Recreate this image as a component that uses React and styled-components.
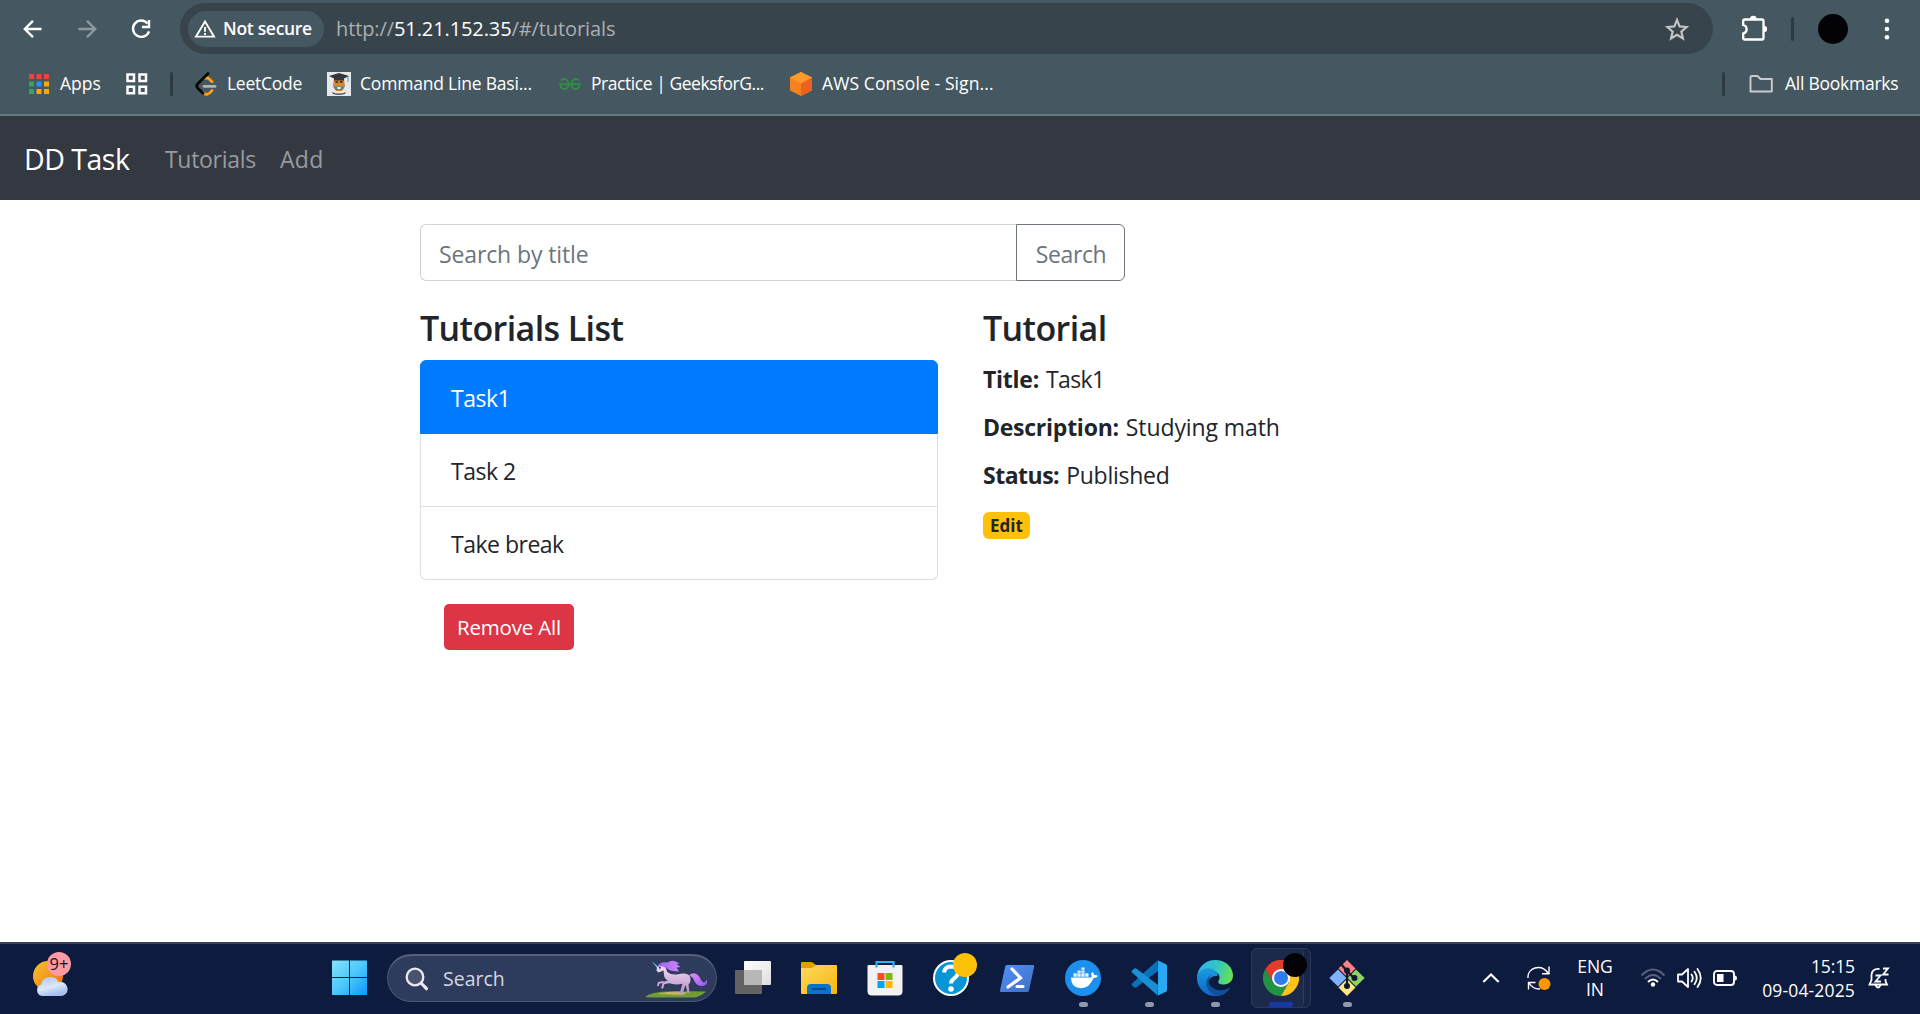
import React from "react";
import styled, { createGlobalStyle } from "styled-components";

const Global = createGlobalStyle`
  *, *::before, *::after { box-sizing: border-box; }
  html, body { margin: 0; padding: 0; }
  body {
    font-family: "Open Sans", "Noto Sans", sans-serif;
    color: #212529;
    background: #fff;
    overflow: hidden;
  }
  button, input { font: inherit; margin: 0; }
  svg { display: block; flex: none; }
`;

const Screen = styled.div`
  width: 1920px;
  height: 1014px;
  display: flex;
  flex-direction: column;
`;

/* ---------- browser chrome ---------- */
const Chrome = styled.header`
  height: 116px;
  background: #455760;
  border-bottom: 2px solid #66777e;
  color: #fff;
`;
const AddressRow = styled.div`
  height: 57px;
  padding: 3px 30px 3px 21px;
  display: flex;
  align-items: center;
`;
const NavButtons = styled.div`
  width: 159px;
  display: flex;
  gap: 30px;
`;
const Omnibox = styled.div`
  width: 1533px;
  height: 51px;
  padding: 0 23px 0 8px;
  border-radius: 26px;
  background: #38444b;
  display: flex;
  align-items: center;
`;
const SecurityChip = styled.div`
  width: 136px;
  height: 36px;
  padding-left: 6px;
  border-radius: 18px;
  background: #455760;
  display: flex;
  align-items: center;
  gap: 7px;
  font-size: 17.5px;
  font-weight: 600;
  line-height: 34px;
  letter-spacing: -0.3px;
  white-space: nowrap;
  span { padding-bottom: 1px; }
`;
const Url = styled.div`
  flex: 1;
  padding: 0 0 1px 12px;
  font-size: 20px;
  letter-spacing: -0.1px;
  color: #a9b0b3;
  b { font-weight: 400; color: #fff; }
`;
const ToolbarRight = styled.div`
  flex: 1;
  padding-left: 28px;
  display: flex;
  align-items: center;
`;
const Separator = styled.i`
  width: 3px;
  height: 24px;
  border-radius: 2px;
  background: #2e3a41;
  margin: ${(p) => p.$margin || 0};
`;
const Avatar = styled.div`
  width: 30px;
  height: 30px;
  border-radius: 50%;
  background: #030207;
`;
const BookmarkRow = styled.div`
  height: 54px;
  padding: 0 22px 0 27px;
  display: flex;
  align-items: center;
`;
const Bookmark = styled.div`
  width: ${(p) => p.$width}px;
  display: flex;
  align-items: center;
  gap: ${(p) => p.$gap || 9}px;
  font-size: 17.5px;
  letter-spacing: ${(p) => p.$track || 0}px;
  white-space: nowrap;
  span { padding-bottom: 2px; }
`;
const Spacer = styled.div` flex: 1; `;

/* ---------- web page ---------- */
const Navbar = styled.nav`
  height: 84px;
  padding: 1px 24px 0;
  background: #343841;
  display: flex;
  align-items: center;
`;
const Brand = styled.a`
  width: 141px;
  color: #fff;
  font-size: 28.5px;
  letter-spacing: -0.5px;
`;
const NavLink = styled.a`
  width: ${(p) => p.$width}px;
  padding-top: 1px;
  color: #999b9f;
  font-size: 23px;
  letter-spacing: ${(p) => p.$track || 0}px;
`;
const Page = styled.main`
  flex: 1;
  padding-top: 24px;
`;
const Content = styled.div`
  width: 1080px;
  margin: 0 auto;
`;
const SearchGroup = styled.form`
  width: 705px;
  height: 57px;
  display: flex;
  margin-bottom: 24px;
`;
const SearchInput = styled.input`
  flex: 1;
  min-width: 0;
  padding: 3px 18px 0;
  border: 1px solid #ced4da;
  border-right: 0;
  border-radius: 6px 0 0 6px;
  outline: 0;
  font-size: 23px;
  letter-spacing: -0.12px;
  &::placeholder { color: #6c757d; opacity: 1; }
`;
const SearchButton = styled.button`
  width: 109px;
  padding: 3px 0 0 1px;
  border: 1px solid #6c757d;
  border-radius: 0 6px 6px 0;
  background: #fff;
  color: #6c757d;
  font-size: 23px;
  letter-spacing: -0.4px;
`;
const Columns = styled.div`
  display: grid;
  grid-template-columns: 518px 1fr;
  column-gap: 45px;
`;
const Column = styled.section``;
const Heading = styled.h4`
  margin: 0 0 8px;
  font-size: 34px;
  font-weight: 600;
  line-height: 47px;
  letter-spacing: -0.6px;
`;
const List = styled.ul`
  list-style: none;
  margin: 0 0 24px;
  padding: 0;
`;
const ListItem = styled.li`
  height: ${(p) => (p.$active ? 74 : 73)}px;
  padding: 19px 30px 0;
  border: solid ${(p) => (p.$active ? "#007bff" : "#dfdfdf")};
  border-width: ${(p) => (p.$active ? "1px" : "0 1px 1px")};
  background: ${(p) => (p.$active ? "#007bff" : "#fff")};
  color: ${(p) => (p.$active ? "#fff" : "#212529")};
  font-size: 23px;
  line-height: 36px;
  letter-spacing: -0.5px;
  &:first-child { border-radius: 6px 6px 0 0; }
  &:last-child { border-radius: 0 0 6px 6px; }
`;
const RemoveButton = styled.button`
  width: 130px;
  height: 46px;
  margin-left: 24px;
  padding: 0;
  border: 0;
  border-radius: 5px;
  background: #dc3545;
  color: #fff;
  font-size: 20.5px;
  letter-spacing: -0.2px;
`;
const Field = styled.p`
  margin: 0 0 12px;
  padding-top: 1px;
  height: 36px;
  display: flex;
  gap: 7px;
  font-size: 23px;
  line-height: 36px;
  letter-spacing: ${(p) => p.$track}px;
  strong { font-weight: 700; letter-spacing: ${(p) => p.$labelTrack}px; }
`;
const EditBadge = styled.a`
  display: inline-block;
  margin-top: 8px;
  width: 47px;
  height: 27px;
  border-radius: 6px;
  background: #ffc107;
  font-size: 17px;
  font-weight: 700;
  line-height: 27px;
  text-align: center;
`;

/* ---------- taskbar ---------- */
const Taskbar = styled.footer`
  height: 72px;
  padding-bottom: 2px;
  background: #0d1b3e;
  border-top: 2px solid #3b4258;
  display: flex;
  align-items: center;
  color: #fff;
`;
const Weather = styled.div`
  width: 316px;
  padding-left: 30px;
  position: relative;
`;
const CountBadge = styled.span`
  position: absolute;
  left: 47px;
  top: -6px;
  width: 24px;
  height: 24px;
  border-radius: 50%;
  background: #ff99a4;
  color: #111;
  font-size: 16.5px;
  line-height: 23px;
  text-align: center;
`;
const StartCell = styled.div`
  width: 71px;
  padding-left: 16px;
`;
const TaskSearch = styled.div`
  width: 330px;
  height: 48px;
  margin-right: 3px;
  padding: 0 8px 0 17px;
  border: 1px solid #4b5674;
  border-top: 2px solid #56607c;
  border-radius: 24px;
  background: #2f3b5c;
  display: flex;
  align-items: center;
  gap: 14px;
  color: #d3d7e0;
  font-size: 19.5px;
  span { flex: 1; }
`;
const AppCell = styled.div`
  width: 66px;
  height: 60px;
  display: flex;
  align-items: center;
  justify-content: center;
  position: relative;
`;
const ActiveTile = styled.div`
  width: 60px;
  height: 60px;
  border-radius: 6px;
  border: 1px solid #2c3857;
  background: #1c294b;
  display: flex;
  align-items: center;
  justify-content: center;
  box-shadow: inset -6px 0 0 #18254a, inset -7px 0 0 #303c5a;
`;
const Running = styled.i`
  position: absolute;
  bottom: 1px;
  left: 50%;
  width: ${(p) => (p.$active ? 24 : 9)}px;
  height: 5px;
  margin-left: ${(p) => (p.$active ? -12 : -4.5)}px;
  border-radius: 3px;
  background: ${(p) => (p.$active ? "#1739a4" : "#9098ab")};
`;
const Dot = styled.i`
  position: absolute;
  left: 35px;
  top: 5px;
  width: 24px;
  height: 24px;
  border-radius: 50%;
  background: ${(p) => p.$color};
`;
const Tray = styled.div`
  flex: 1;
  padding-left: 102px;
  display: flex;
  align-items: center;
`;
const TrayItem = styled.div`
  width: ${(p) => p.$width}px;
`;
const TrayText = styled.div`
  width: ${(p) => p.$width}px;
  margin-right: ${(p) => p.$gap}px;
  text-align: ${(p) => p.$align || "center"};
  font-size: 17.5px;
  line-height: ${(p) => p.$line}px;
  letter-spacing: ${(p) => p.$track || 0}px;
  white-space: nowrap;
`;
const DateLine = styled.div`
  letter-spacing: 0.15px;
`;

/* ---------- icons ---------- */
const Arrow = ({ color, flip }) => (
  <svg width="24" height="24" viewBox="0 0 24 24" fill="none" stroke={color} strokeWidth="2.4">
    <g transform={flip ? "translate(24 0) scale(-1 1)" : undefined}>
      <path d="M20.500 12H4M12 3.800 3.800 12l8.200 8.200" />
    </g>
  </svg>
);
const Reload = () => (
  <svg width="24" height="24" viewBox="0 0 24 24" fill="none" stroke="#fff" strokeWidth="2.4">
    <path d="M18.600 6.500A8.200 8.200 0 1 0 20 14.300" />
    <path d="M20 3v7h-7" />
  </svg>
);
const Warning = () => (
  <svg width="22" height="20" viewBox="0 0 22 20" fill="none" stroke="#fff" strokeWidth="1.900">
    <path d="M11 2.600 20 17.600H2Z" />
    <path d="M11 8v4.800M11 14.100v2" />
  </svg>
);
const Star = () => (
  <svg width="26" height="26" viewBox="0 0 26 26" fill="none" stroke="#c3c5c6" strokeWidth="2.100">
    <path d="m13 3.900 2.600 6.500 7 .6-5.300 4.600 1.700 6.900-6-3.700-6 3.700 1.700-6.900-5.300-4.600 7-.6Z" />
  </svg>
);
const Puzzle = () => (
  <svg width="26" height="30" viewBox="0 0 26 30">
    <path d="M3.500 5.500H21a1.500 1.500 0 0 1 1.500 1.500V24a1.500 1.500 0 0 1-1.500 1.500H3.500A1.300 1.300 0 0 1 2.200 24.200V19.500C6.800 18.500 6.800 12 2.200 11V6.800A1.300 1.300 0 0 1 3.500 5.500Z" fill="none" stroke="#fff" strokeWidth="2.300" />
    <path d="M9 5a3.300 3.300 0 0 1 6.600 0ZM23 11.800a3.200 3.200 0 0 1 0 6.400Z" fill="#fff" />
  </svg>
);
const Kebab = () => (
  <svg width="6" height="22" viewBox="0 0 6 22" fill="#fff">
    <circle cx="3" cy="2.700" r="2.300" /><circle cx="3" cy="11" r="2.300" /><circle cx="3" cy="19.300" r="2.300" />
  </svg>
);
const AppsIcon = () => {
  const colors = ["#f44336", "#f44336", "#f44336", "#34a853", "#2196f3", "#fbab00", "#34a853", "#fbab00", "#fbab00"];
  return (
    <svg width="24" height="24" viewBox="0 0 24 24">
      {colors.map((c, i) => (
        <rect key={i} x={2 + (i % 3) * 7.5} y={2 + Math.floor(i / 3) * 7.5} width="5" height="5" fill={c} />
      ))}
    </svg>
  );
};
const GridIcon = () => (
  <svg width="24" height="24" viewBox="0 0 24 24" fill="none" stroke="#fff" strokeWidth="2.500">
    <path d="M2.500 2.500H9V9H2.500ZM14.500 2.500H21V9h-6.500ZM2.500 14.800H9v6.500H2.500ZM14.500 14.800H21v6.500h-6.500Z" />
  </svg>
);
const LeetIcon = () => (
  <svg width="22" height="24" viewBox="0 0 22 24" fill="none" strokeLinecap="round" strokeWidth="2.800">
    <path d="m9.500 6.200 3.500-.2 4 3.700M8 20.800c3 2.700 6 1.800 9-2.300" stroke="#ffa116" />
    <path d="M9 14.300h11" stroke="#b3b3b3" />
    <path d="M13 1.600 2.800 11.800q-2 2.200 0 4.400L8 21.200" stroke="#070706" />
  </svg>
);
const BootcampIcon = () => (
  <svg width="24" height="24" viewBox="0 0 24 24">
    <rect width="24" height="24" fill="#e8e8ea" />
    <path d="M7 7h10l1 7-3 5H9l-3-5Z" fill="#d9822f" />
    <path d="m2 4 10-3 10 3-5 2.500v2H7v-2Z" fill="#33363b" />
    <path d="M21 4v6" stroke="#2fa0bd" strokeWidth="1" />
    <path d="M8.500 10h2.600M13 10h2.600" stroke="#2d2722" strokeWidth="1.500" />
    <path d="m6 14 3 1 3-1 3 1 3-1-2.500 4h-7Z" fill="#2d8fa9" />
    <path d="M10.500 15h3v2h-3Z" fill="#fff" />
    <path d="M5 20q7 3 14 0l-1 2q-6 2-12 0Z" fill="#55585e" />
  </svg>
);
const GeeksIcon = () => (
  <svg width="24" height="16" viewBox="0 0 24 16" fill="none" stroke="#2f8d46" strokeWidth="1.900">
    <path d="M3 4.600C4.500 2.400 10 1.800 10.500 8 10.500 14.500 2.800 14.500 2.200 8.300H21.800C21.200 14.500 13.500 14.500 13.500 8 14 1.800 19.500 2.400 21 4.600" />
  </svg>
);
const AwsIcon = () => (
  <svg width="24" height="24" viewBox="0 0 24 24">
    <path d="m12 0 11 5.500v13L12 24 1 18.500v-13Z" fill="#f58220" />
    <path d="m12 0 11 5.500L12 11.500 1 5.500Z" fill="#fe9a2a" />
    <path d="M12 11.500 23 5.500v13L12 24Z" fill="#ed6120" />
  </svg>
);
const FolderOutline = () => (
  <svg width="25" height="20" viewBox="0 0 25 20" fill="none" stroke="#c9cbcc" strokeWidth="1.900" strokeLinejoin="round">
    <path d="M2.500 2h6l3 3h11.300v12.500H1.500V3Z" />
  </svg>
);
const WeatherIcon = () => (
  <svg width="40" height="40" viewBox="0 0 40 40">
    <defs>
      <linearGradient id="sun" x1="0" y1="0" x2="1" y2="1"><stop offset="0" stopColor="#f7c62f" /><stop offset="1" stopColor="#f06a14" /></linearGradient>
      <linearGradient id="cloud" x1="0" y1="0" x2=".4" y2="1"><stop offset="0" stopColor="#a9c2ee" /><stop offset=".6" stopColor="#dce8fb" /><stop offset="1" stopColor="#a5bfee" /></linearGradient>
    </defs>
    <circle cx="18" cy="18" r="15" fill="url(#sun)" />
    <path d="M12 38a6 6 0 0 1-1-11.500 9.500 9.500 0 0 1 17.800-2.200A7 7 0 1 1 30 38Z" fill="url(#cloud)" />
  </svg>
);
const WindowsIcon = () => (
  <svg width="36" height="36" viewBox="0 0 36 36">
    <defs><linearGradient id="win" x1="0" y1="0" x2="36" y2="36" gradientUnits="userSpaceOnUse"><stop offset="0" stopColor="#86e3fc" /><stop offset=".5" stopColor="#4cc7fb" /><stop offset="1" stopColor="#0a93ff" /></linearGradient></defs>
    <path d="M.5.500H17V17H0V1ZM18 .5H34.500L35 1v16H18ZM0 18h17v17H.5L0 34.500ZM18 18h17v16.500l-.5.500H18Z" fill="url(#win)" />
  </svg>
);
const Magnifier = () => (
  <svg width="24" height="24" viewBox="0 0 24 24" fill="none" stroke="#e8eaf0" strokeLinecap="round">
    <circle cx="10" cy="10" r="8.300" strokeWidth="2.300" fill="#48536f" />
    <path d="m16.500 16.500 5 5.200" strokeWidth="3.200" />
  </svg>
);
const Unicorn = () => (
  <svg width="63" height="40" viewBox="0 0 63 40">
    <defs>
      <linearGradient id="mane" x1="0" y1="0" x2="1" y2="0"><stop offset="0" stopColor="#a45be8" /><stop offset="1" stopColor="#c88bff" /></linearGradient>
      <linearGradient id="body" x1="0" y1="0" x2="0" y2="1"><stop offset="0" stopColor="#f3dcf4" /><stop offset="1" stopColor="#b58fc9" /></linearGradient>
      <linearGradient id="tail" x1="0" y1="0" x2="1" y2="1"><stop offset="0" stopColor="#f08be8" /><stop offset="1" stopColor="#8a5cff" /></linearGradient>
    </defs>
    <path d="M0 38q7-6 27-5.500 17-.5 34 0-4 4-11 6H3Z" fill="#6f9c33" />
    <path d="M12 35q17-4 30-1.500L38 36Z" fill="#c1b565" />
    <path d="m6.500 2 5.500 7 1.300-1.200Z" fill="#6dc2e2" />
    <path d="M44 16q8-5 12 5 3 5 6-.5 1 7-6 6.500-6-1-8-8Z" fill="url(#tail)" />
    <path d="m12 8 5-1.500q4 1 5 6 3 3.500 10 3 10-3 13 2 1.500 5-1.500 8l1 8.500-2-.2-2-8-3 9h-3l3-10q-8 1.500-13-.5l-5 .8-1.500 5-2-1 2-6 5-1.500q-4-2-4-6l-.5-4-5 2-2-1.800Z" fill="url(#body)" />
    <path d="m18 22-5 1-1 4 1.800.3.700-2.800 5.500-.5Z" fill="#c9a9da" />
    <path d="M12.500 7q3-5 10-3.500 4-3 8-1l4 2-3 .5 4 3-4 .5 2.500 4q-9 0-12-3-3-3-9.500-2.500Z" fill="url(#mane)" />
    <path d="M14 8.700h1.800" stroke="#2c1c44" strokeWidth="1.500" />
  </svg>
);
const TaskViewIcon = () => (
  <svg width="36" height="36" viewBox="0 0 36 36">
    <defs><linearGradient id="tv" x1="0" y1="0" x2="1" y2="1"><stop offset="0" stopColor="#fff" /><stop offset="1" stopColor="#dedede" /></linearGradient></defs>
    <rect y="10" width="27" height="24" rx="1" fill="#626262" />
    <rect x="9" y="1" width="27" height="24" rx="1" fill="url(#tv)" />
    <path d="M9 10h18v15H9Z" fill="#b7b7b7" />
  </svg>
);
const ExplorerIcon = () => (
  <svg width="36" height="36" viewBox="0 0 36 36">
    <defs><linearGradient id="fold" x1="0" y1="0" x2="1" y2="1"><stop offset="0" stopColor="#ffda62" /><stop offset="1" stopColor="#f7b50c" /></linearGradient></defs>
    <path d="M0 3q0-1 1-1h9q2 0 3 1.500L15 5v8H0Z" fill="#df9e05" />
    <path d="M0 8h10.500L15.500 5H35q1 0 1 1v27q0 1-1 1H1q-1 0-1-1Z" fill="url(#fold)" />
    <path d="M6 34V28q0-4 4-4h16q4 0 4 4v6Z" fill="#0b72c9" />
    <path d="M11 29h14" stroke="#064a8c" strokeWidth="2" />
  </svg>
);
const StoreIcon = () => (
  <svg width="36" height="36" viewBox="0 0 36 36">
    <path d="M2 5H34q1.500 0 1.500 1v25q0 4.500-4.500 4.500H5Q.5 35.500.5 31V6q0-1 1.500-1Z" fill="#f2f2f2" />
    <path d="M9.500 7.500V2h17v5.500" fill="none" stroke="#2cb3f0" strokeWidth="2.200" />
    <path d="M10.500 13h7v7h-7Z" fill="#f25022" /><path d="M18.500 13h7v7h-7Z" fill="#7fba00" />
    <path d="M10.500 21h7v7h-7Z" fill="#00a4ef" /><path d="M18.500 21h7v7h-7Z" fill="#ffb900" />
  </svg>
);
const HelpIcon = () => (
  <svg width="36" height="36" viewBox="0 0 36 36">
    <circle cx="18" cy="18" r="17" fill="#0795d8" stroke="#fff" strokeWidth="2" />
    <path d="M11 12.500Q12 6.500 18 6.500q7 .3 7 6 0 3-4 6-3 2.200-3 5" fill="none" stroke="#fff" strokeWidth="4" />
    <circle cx="18" cy="29" r="2.800" fill="#fff" />
  </svg>
);
const PowerShellIcon = () => (
  <svg width="36" height="36" viewBox="0 0 36 36">
    <defs><linearGradient id="ps" x1="0" y1="0" x2="1" y2="1"><stop offset="0" stopColor="#5391fe" /><stop offset="1" stopColor="#3e6dbf" /></linearGradient></defs>
    <path d="M8 5h26q1.500 0 1.200 1.500L30 30.500Q29.700 32 28 32H2Q.7 32 1 30.500L6.200 6.500Q6.500 5 8 5Z" fill="url(#ps)" />
    <path d="m13 9 8.500 9L9 27" fill="none" stroke="#fff" strokeWidth="3.200" strokeLinecap="round" />
    <path d="M18 26.500h6" stroke="#fff" strokeWidth="3" strokeLinecap="round" />
  </svg>
);
const DockerIcon = () => (
  <svg width="36" height="36" viewBox="0 0 36 36">
    <circle cx="18" cy="18" r="18" fill="#1d90ed" />
    <path d="M6 17.500h20q1-.5.500-2-1-2 .8-3.500 1.800 1.200 1.700 3 2.500-.5 4 1-1.500 2.200-4.500 2-4 10.500-13 10.200Q6 28 6 17.500Z" fill="#fff" />
    <path d="M8.500 13.300h3.300v3.500H8.500ZM12.400 13.300h3.300v3.500h-3.300ZM16.300 13.300h3.300v3.500h-3.300ZM20.200 13.300h3.300v3.500h-3.300ZM12.400 10.500h3.300v2.300h-3.300ZM16.300 10.500h3.300v2.300h-3.300ZM16.300 7.500h3.300v2.300h-3.300Z" fill="#e4f2fd" />
  </svg>
);
const VSCodeIcon = () => (
  <svg width="36" height="36" viewBox="0 0 36 36">
    <path d="M26.500.5 1 23.500q-1 1 0 2L3.500 27.500q.8.500 1.700 0L27 11Z" fill="#0a70b8" />
    <path d="M26.500 35.500 1 12.500q-1-1 0-2L3.500 8.500q.8-.5 1.700 0L27 25Z" fill="#1b8fd6" />
    <path d="m26.500.300 8.500 4q1 .6 1 1.700v24q0 1.100-1 1.700l-8.500 4Q27 35 27 34V2Q27 1 26.500.3Z" fill="#27a9f4" />
  </svg>
);
const EdgeIcon = () => (
  <svg width="36" height="36" viewBox="0 0 36 36">
    <defs>
      <linearGradient id="eg" x1="0" y1=".3" x2="1" y2=".5"><stop offset="0" stopColor="#2bb5e8" /><stop offset=".55" stopColor="#33c6c2" /><stop offset="1" stopColor="#69e34a" /></linearGradient>
      <linearGradient id="eb" x1="0" y1="0" x2="0" y2="1"><stop offset="0" stopColor="#1b9de2" /><stop offset="1" stopColor="#0f63c4" /></linearGradient>
    </defs>
    <path d="M0 18A18 18 0 0 1 18 0c11 0 18 7.500 18 15.500 0 5.500-4 9-9 9-4.500 0-6.500-1.500-5.500-3.500 2-3 1-7-2-8.500C11 7.500 1 11 0 18Z" fill="url(#eg)" />
    <path d="M0 18C.5 10 9 6.500 15 9c4 1.500 6 4 5.500 7-7-1-12 6-9 12 2.500 5 8 8 12.500 7.200Q21 36 18 36A18 18 0 0 1 0 18Z" fill="url(#eb)" />
    <path d="M14 14.500c-3.500 5-3 10 2 13.500 5 3.300 11.500 2.800 16.500-.5q1-.5.600.6C29.500 34 25 36 21 35.800 13 34.500 7.500 27 10 20q1.200-3.500 4-5.500Z" fill="#114f97" />
  </svg>
);
const ChromeIcon = () => (
  <svg width="36" height="36" viewBox="0 0 36 36">
    <path d="M2.400 9A18 18 0 0 1 33.600 9H18L10.200 22.500Z" fill="#e33b2e" />
    <path d="M2.400 9A18 18 0 0 0 18 36L25.800 22.500H10.200Z" fill="#229342" />
    <path d="M33.600 9A18 18 0 0 1 18 36L25.800 22.500 18 9Z" fill="#fcc31e" />
    <circle cx="18" cy="18" r="9" fill="#fff" /><circle cx="18" cy="18" r="7" fill="#2f7cf0" />
  </svg>
);
const GitIcon = () => (
  <svg width="36" height="36" viewBox="0 0 36 36">
    <path d="m18 0 8.500 8.500L18 17 9.500 8.500Z" fill="#ff8080" />
    <path d="m9 9.500 8.500 8.500L9 26.500.3 18Z" fill="#80b3ff" />
    <path d="m27 9.500 8.700 8.500-8.700 8.500L18.500 18Z" fill="#8dd35f" />
    <path d="m18 19 8.500 8.500L18 36l-8.500-8.500Z" fill="#ffe680" />
    <path d="m12 4 6 7v15M18 11l7 7" stroke="#101a2e" strokeWidth="2.200" fill="none" />
    <g fill="#101a2e"><circle cx="18" cy="10.500" r="3" /><circle cx="18" cy="26" r="3" /><circle cx="25.500" cy="18" r="3" /></g>
  </svg>
);
const ChevronUp = () => (
  <svg width="18" height="12" viewBox="0 0 18 12" fill="none" stroke="#fff" strokeWidth="2.200"><path d="m1.300 10 7.700-7.500L16.700 10" /></svg>
);
const SyncIcon = () => (
  <svg width="26" height="26" viewBox="0 0 26 26" fill="none" stroke="#fff" strokeWidth="1.400">
    <path d="M2 13C1 3 15-2 22 8M23 1.500v7.300h-7M14 24Q7 24.500 3 18M2.500 24.500V17.500h7" />
    <circle cx="18.500" cy="19" r="6" fill="#ff9800" stroke="none" />
  </svg>
);
const WifiIcon = () => (
  <svg width="26" height="20" viewBox="0 0 26 20" fill="none" strokeWidth="1.900">
    <path d="M1.500 7.500q11.500-12 23 0M5 11q8-8 16 0" stroke="#57617c" />
    <path d="M8 14q5-4.800 10 0" stroke="#fff" />
    <circle cx="13" cy="16.500" r="2.200" fill="#fff" />
  </svg>
);
const SpeakerIcon = () => (
  <svg width="26" height="22" viewBox="0 0 26 22" fill="none" stroke="#fff" strokeWidth="1.800" strokeLinejoin="round" strokeLinecap="round">
    <path d="M2 7.500h4l6-5.500v18l-6-5.500H2ZM15.500 7.500q2.500 3.500 0 7M18.500 4.800q4.500 6.200 0 12.400M21.500 2q6.500 9 0 18" />
  </svg>
);
const BatteryIcon = () => (
  <svg width="26" height="18" viewBox="0 0 26 18" fill="none" stroke="#fff" strokeWidth="1.900">
    <rect x="2" y="2" width="20" height="14" rx="3" />
    <path d="M5 5h6.500v8H5Z" fill="#fff" stroke="none" /><path d="M23 6.500q2 0 2 2.500t-2 2.500Z" fill="#fff" stroke="none" />
  </svg>
);
const BellIcon = () => (
  <svg width="24" height="24" viewBox="0 0 24 24" fill="none" stroke="#fff" strokeWidth="1.800">
    <path d="M12.500 3Q5 2.500 4.500 9v5L2.500 18.500H20L18.500 15v-2M8.500 19q2.500 5 5 0M8.500 9.500h5l-5 6h5.500M16 2.500h5l-5 6h5.500" />
  </svg>
);

const bookmarks = [
  { label: "LeetCode", icon: <LeetIcon />, width: 132, gap: 10, track: -0.27 },
  { label: "Command Line Basi...", icon: <BootcampIcon />, width: 231, gap: 9, track: -0.2 },
  { label: "Practice | GeeksforG...", icon: <GeeksIcon />, width: 231, gap: 9, track: -0.45 },
  { label: "AWS Console - Sign...", icon: <AwsIcon />, width: 220, gap: 9, track: 0.1 },
];
const tutorials = ["Task1", "Task 2", "Take break"];
const fields = [
  { label: "Title:", value: "Task1", labelTrack: -0.25, track: -0.65 },
  { label: "Description:", value: "Studying math", labelTrack: -0.25, track: -0.1 },
  { label: "Status:", value: "Published", labelTrack: -0.5, track: -0.25 },
];
const apps = [
  { icon: <TaskViewIcon /> },
  { icon: <ExplorerIcon /> },
  { icon: <StoreIcon /> },
  { icon: <HelpIcon />, dot: "#ffc107" },
  { icon: <PowerShellIcon /> },
  { icon: <DockerIcon />, running: true },
  { icon: <VSCodeIcon />, running: true },
  { icon: <EdgeIcon />, running: true },
  { icon: <ChromeIcon />, running: true, active: true, dot: "#030207" },
  { icon: <GitIcon />, running: true },
];

export default function App() {
  return (
    <Screen>
      <Global />
      <Chrome>
        <AddressRow>
          <NavButtons>
            <Arrow color="#fff" />
            <Arrow color="#8d989d" flip />
            <Reload />
          </NavButtons>
          <Omnibox>
            <SecurityChip><Warning /><span>Not secure</span></SecurityChip>
            <Url>http://<b>51.21.152.35</b>/#/tutorials</Url>
            <Star />
          </Omnibox>
          <ToolbarRight>
            <Puzzle />
            <Separator $margin="0 24px 0 24px" />
            <Avatar />
            <Spacer />
            <Kebab />
          </ToolbarRight>
        </AddressRow>
        <BookmarkRow>
          <Bookmark $width={98}><AppsIcon /><span>Apps</span></Bookmark>
          <GridIcon />
          <Separator $margin="0 22px 0 21px" />
          {bookmarks.map((b) => (
            <Bookmark key={b.label} $width={b.width} $gap={b.gap} $track={b.track}>
              {b.icon}<span>{b.label}</span>
            </Bookmark>
          ))}
          <Spacer />
          <Separator $margin="0 24px 0 0" />
          <Bookmark $width={149} $gap={11} $track={-0.25}><FolderOutline /><span>All Bookmarks</span></Bookmark>
        </BookmarkRow>
      </Chrome>

      <Navbar>
        <Brand>DD Task</Brand>
        <NavLink $width={115} $track={-0.3}>Tutorials</NavLink>
        <NavLink $width={60} $track={0.3}>Add</NavLink>
      </Navbar>

      <Page>
        <Content>
          <SearchGroup>
            <SearchInput placeholder="Search by title" />
            <SearchButton type="button">Search</SearchButton>
          </SearchGroup>
          <Columns>
            <Column>
              <Heading>Tutorials List</Heading>
              <List>
                {tutorials.map((t, i) => <ListItem key={t} $active={i === 0}>{t}</ListItem>)}
              </List>
              <RemoveButton>Remove All</RemoveButton>
            </Column>
            <Column>
              <Heading>Tutorial</Heading>
              {fields.map((f) => (
                <Field key={f.label} $labelTrack={f.labelTrack} $track={f.track}>
                  <strong>{f.label}</strong><span>{f.value}</span>
                </Field>
              ))}
              <EditBadge>Edit</EditBadge>
            </Column>
          </Columns>
        </Content>
      </Page>

      <Taskbar>
        <Weather><WeatherIcon /><CountBadge>9+</CountBadge></Weather>
        <StartCell><WindowsIcon /></StartCell>
        <TaskSearch><Magnifier /><span>Search</span><Unicorn /></TaskSearch>
        {apps.map((app, i) => (
          <AppCell key={i}>
            {app.active ? <ActiveTile>{app.icon}</ActiveTile> : app.icon}
            {app.dot && <Dot $color={app.dot} />}
            {app.running && <Running $active={app.active} />}
          </AppCell>
        ))}
        <Tray>
          <TrayItem $width={44}><ChevronUp /></TrayItem>
          <TrayItem $width={46}><SyncIcon /></TrayItem>
          <TrayText $width={46} $gap={22} $line={23}>ENG<br />IN</TrayText>
          <TrayItem $width={36}><WifiIcon /></TrayItem>
          <TrayItem $width={36}><SpeakerIcon /></TrayItem>
          <TrayItem $width={36}><BatteryIcon /></TrayItem>
          <TrayText $width={107} $gap={12} $line={24} $align="right" $track={-0.1}>
            15:15<DateLine>09-04-2025</DateLine>
          </TrayText>
          <BellIcon />
        </Tray>
      </Taskbar>
    </Screen>
  );
}
